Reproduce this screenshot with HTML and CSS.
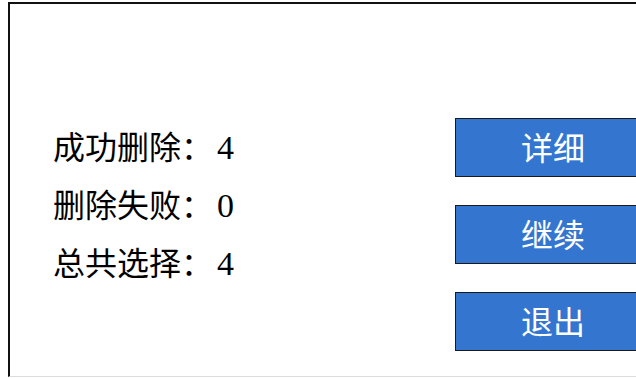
FILE: index.html
```html
<!DOCTYPE html>
<html>
<head>
    <title>删除结果</title>
    <link rel="stylesheet" href="styles.css">
</head>
<body>
    <div class="frame">
        <div class="content">
            <ul class="info">
                <li>成功删除：<span class="num">4</span></li>
                <li>删除失败：<span class="num">0</span></li>
                <li>总共选择：<span class="num">4</span></li>
            </ul>
            <div class="actions">
                <button class="btn">详细</button>
                <button class="btn">继续</button>
                <button class="btn">退出</button>
            </div>
        </div>
    </div>
</body>
</html>
```

FILE: styles.css
```css
html, body {
    margin: 0;
    padding: 0;
    overflow: hidden;
    background-color: #fff;
}

body {
    font-family: 'Liberation Serif', 'Noto Sans CJK SC', serif;
    color: #000;
}

.frame {
    box-sizing: border-box;
    margin: 2px 0 0 8px;
    width: calc(100% - 8px);
    height: 375px;
    border-top: 2px solid #111;
    border-left: 2px solid #111;
    border-bottom: 1px solid #ddd;
}

.content {
    display: flex;
    align-items: flex-start;
    padding-top: 114px;
}

.info {
    list-style: none;
    margin: 1px 0 0 0;
    padding: 0 0 0 43px;
    width: 402px;
}

.info li {
    font-size: 32px;
    line-height: 58px;
    height: 58px;
}

.num {
    font-size: 34px;
    margin-left: 4px;
}

.actions {
    flex: 1;
    display: flex;
    flex-direction: column;
    gap: 28px;
}

.btn {
    width: 100%;
    height: 59px;
    box-sizing: border-box;
    background-color: #3476cf;
    border: 1px solid #1a1a1a;
    border-right: none;
    color: #fff;
    font-family: 'Liberation Serif', 'Noto Sans CJK SC', serif;
    font-size: 32px;
    padding: 0 0 4px 14px;
    cursor: pointer;
}
```
